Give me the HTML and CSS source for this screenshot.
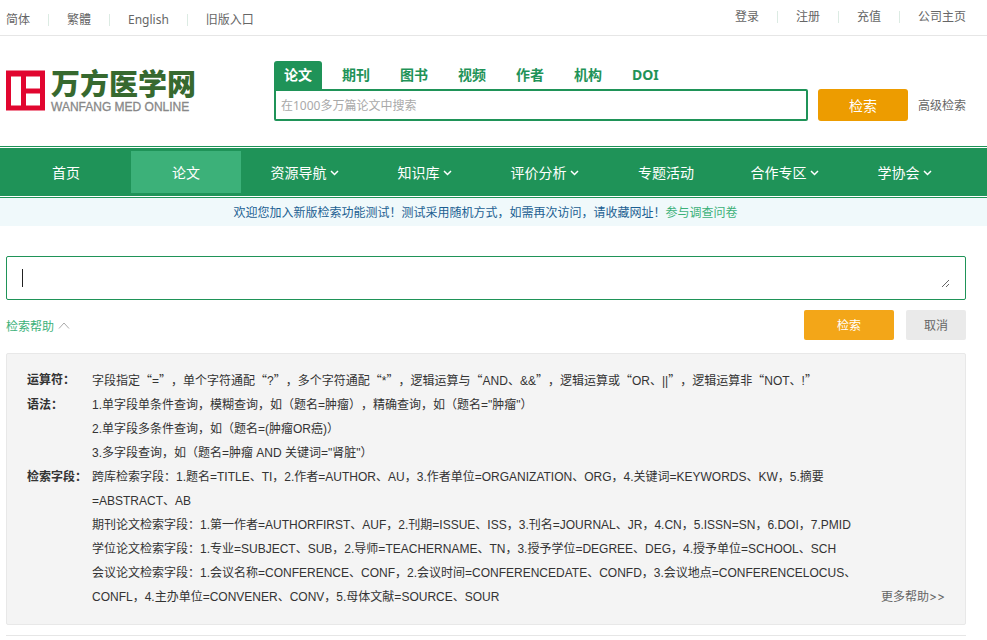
FILE: index.html
```html
<!DOCTYPE html>
<html lang="zh-CN">
<head>
<meta charset="utf-8">
<meta name="viewport" content="width=device-width, initial-scale=1">
<title>万方医学网</title>
<link rel="stylesheet" href="styles.css">
</head>
<body>
<div class="topbar">
  <nav class="links"><a href="#">简体</a><a href="#">繁體</a><a href="#">English</a><a href="#">旧版入口</a></nav>
  <nav class="links account"><a href="#">登录</a><a href="#">注册</a><a href="#">充值</a><a href="#">公司主页</a></nav>
</div>

<header class="header">
  <a class="logo" href="#">
    <svg class="logo-mark" viewBox="0 0 39 40" aria-hidden="true">
      <path fill="#e1062f" d="M0 0h39v40H0z"/>
      <path fill="#fff" d="M5 6h10v29H5zM20 6h14v12H20zM20 23h14v12H20z"/>
    </svg>
    <span class="logo-text"><span class="logo-cn">万方医学网</span><span class="logo-en">WANFANG MED ONLINE</span></span>
  </a>
  <form class="search">
    <div class="tabs">
      <button type="button" class="tab active">论文</button>
      <button type="button" class="tab">期刊</button>
      <button type="button" class="tab">图书</button>
      <button type="button" class="tab">视频</button>
      <button type="button" class="tab">作者</button>
      <button type="button" class="tab">机构</button>
      <button type="button" class="tab">DOI</button>
    </div>
    <div class="search-row">
      <input class="search-input" type="text" placeholder="在1000多万篇论文中搜索" aria-label="搜索论文">
      <button type="button" class="search-button">检索</button>
      <a class="advanced" href="#">高级检索</a>
    </div>
  </form>
</header>

<nav class="mainnav">
  <div class="mainnav-items">
    <a href="#">首页</a>
    <a href="#" class="current">论文</a>
    <a href="#">资源导航<svg class="down" viewBox="0 0 9 6"><path d="M1 1l3.500 3.500L8 1"/></svg></a>
    <a href="#">知识库<svg class="down" viewBox="0 0 9 6"><path d="M1 1l3.500 3.500L8 1"/></svg></a>
    <a href="#">评价分析<svg class="down" viewBox="0 0 9 6"><path d="M1 1l3.500 3.500L8 1"/></svg></a>
    <a href="#">专题活动</a>
    <a href="#">合作专区<svg class="down" viewBox="0 0 9 6"><path d="M1 1l3.500 3.500L8 1"/></svg></a>
    <a href="#">学协会<svg class="down" viewBox="0 0 9 6"><path d="M1 1l3.500 3.500L8 1"/></svg></a>
  </div>
</nav>
<div class="notice">欢迎您加入新版检索功能测试！测试采用随机方式，如需再次访问，请收藏网址！<a href="#">参与调查问卷</a></div>

<main class="main">
  <div class="query"><textarea aria-label="检索表达式"></textarea></div>
  <div class="actions">
    <a class="help-toggle" href="#help">检索帮助<svg viewBox="0 0 12 7"><path d="M1 6.500L6 1l5 5.500"/></svg></a>
    <button type="button" class="submit">检索</button>
    <button type="button" class="cancel">取消</button>
  </div>
  <section class="help" id="help">
    <dl>
      <dt>运算符：</dt>
      <dd>字段指定<span class="quote">“</span>=<span class="quote">”</span>，单个字符通配<span class="quote">“</span>?<span class="quote">”</span>，多个字符通配<span class="quote">“</span>*<span class="quote">”</span>，逻辑运算与<span class="quote">“</span>AND、&amp;&amp;<span class="quote">”</span>，逻辑运算或<span class="quote">“</span>OR、||<span class="quote">”</span>，逻辑运算非<span class="quote">“</span>NOT、!<span class="quote">”</span></dd>
      <dt>语法：</dt>
      <dd>1.单字段单条件查询，模糊查询，如（题名=肿瘤），精确查询，如（题名="肿瘤"）<br>2.单字段多条件查询，如（题名=(肿瘤OR癌)）<br>3.多字段查询，如（题名=肿瘤 AND 关键词="肾脏"）</dd>
      <dt>检索字段：</dt>
      <dd>跨库检索字段：1.题名=TITLE、TI，2.作者=AUTHOR、AU，3.作者单位=ORGANIZATION、ORG，4.关键词=KEYWORDS、KW，5.摘要<br>=ABSTRACT、AB<br>期刊论文检索字段：1.第一作者=AUTHORFIRST、AUF，2.刊期=ISSUE、ISS，3.刊名=JOURNAL、JR，4.CN，5.ISSN=SN，6.DOI，7.PMID<br>学位论文检索字段：1.专业=SUBJECT、SUB，2.导师=TEACHERNAME、TN，3.授予学位=DEGREE、DEG，4.授予单位=SCHOOL、SCH<br>会议论文检索字段：1.会议名称=CONFERENCE、CONF，2.会议时间=CONFERENCEDATE、CONFD，3.会议地点=CONFERENCELOCUS、<br>CONFL，4.主办单位=CONVENER、CONV，5.母体文献=SOURCE、SOUR</dd>
    </dl>
    <a class="more" href="#">更多帮助&gt;&gt;</a>
  </section>
  <hr>
</main>
</body>
</html>
```
FILE: styles.css
```css
* { box-sizing: border-box; }
body {
  margin: 0;
  background: #fff;
  color: #333;
  font: 12px/24px "Noto Sans", "Noto Sans CJK SC", sans-serif;
}
a { color: inherit; text-decoration: none; }
button, input, textarea { font: inherit; border: 0; padding: 0; margin: 0; }

.topbar {
  display: flex;
  justify-content: space-between;
  height: 36px;
  padding: 8px 21px 0 6px;
  border-bottom: 1px solid #e6e6e6;
  color: #666;
}
.links { display: flex; }
.links a { display: flex; align-items: center; height: 24px; }
.links a + a::before {
  content: "";
  width: 1px;
  height: 12px;
  margin: 0 18px;
  background: #dcebe3;
}
.account { margin-top: -3px; }

.header {
  display: flex;
  align-items: flex-start;
  height: 110px;
  padding: 25px 21px 0 6px;
}
.logo { display: flex; align-items: center; gap: 6px; width: 268px; padding-top: 5px; }
.logo-mark { width: 39px; height: 41px; }
.logo-text { display: flex; flex-direction: column; white-space: nowrap; }
.logo-cn {
  height: 33px;
  color: #37692f;
  font: 900 29px/38px "Liberation Sans", "Noto Sans CJK SC", sans-serif;
}
.logo-en { color: #888; font: 12px/16px "Liberation Sans", sans-serif; -webkit-text-stroke: 0.3px #888; }

.search { flex: 1; }
.tabs { display: flex; gap: 10px; }
.tab {
  height: 28px;
  padding: 0 10px;
  border-radius: 3px 3px 0 0;
  background: none;
  color: #1f9358;
  font-size: 14px;
  font-weight: 700;
}
.tab.active { background: #1f9358; color: #fff; }
.search-row { display: flex; align-items: center; }
.search-input {
  flex: 1;
  min-width: 0;
  height: 32px;
  padding: 0 5px;
  border: 2px solid #1f9358;
  border-radius: 0 2px 2px 2px;
}
.search-input::placeholder { color: #a9a9a9; }
.search-button {
  width: 90px;
  height: 32px;
  margin: 0 10px;
  padding-top: 2px;
  border-radius: 3px;
  background: #ed9c00;
  color: #fff;
  font-size: 14px;
}
.advanced { padding-top: 2px; color: #666; }

.mainnav {
  padding: 1px 0;
  border: solid #1f9358;
  border-width: 1px 0;
}
.mainnav-items {
  display: flex;
  gap: 10px;
  padding: 3px 11px;
  background: #1f9358;
}
.mainnav a {
  display: flex;
  align-items: center;
  justify-content: center;
  width: 110px;
  height: 42px;
  padding-top: 2px;
  color: #fff;
  font-size: 14px;
}
.mainnav .current { background: #3cb179; }
.down { width: 9px; height: 6px; margin: 0 3px; fill: none; stroke: #fff; stroke-width: 1.5; }

.notice {
  height: 28px;
  padding-right: 16px;
  background: #f0f9fb;
  color: #1c5f92;
  line-height: 30px;
  text-align: center;
}
.notice a { color: #3cb179; }

.main { padding: 30px 21px 0 6px; }
.query {
  position: relative;
  height: 44px;
  padding: 11px 15px;
  border: 1px solid #1f9358;
  border-radius: 2px;
}
.query::before {
  content: "";
  position: absolute;
  top: 12px;
  left: 15px;
  width: 1px;
  height: 18px;
  background: #222;
}
.query textarea { display: block; width: 100%; height: 20px; outline: 0; background: none; resize: both; }

.actions { display: flex; align-items: center; gap: 12px; padding: 10px 0 13px; }
.help-toggle { display: flex; align-items: center; gap: 4px; margin-right: auto; padding-top: 4px; color: #3cb179; }
.help-toggle svg { width: 12px; height: 7px; margin-bottom: 4px; fill: none; stroke: #aaa; }
.actions button { height: 30px; padding-top: 2px; border-radius: 2px; }
.submit { width: 90px; background: #f3a618; color: #fff; }
.cancel { width: 60px; background: #eaeaea; color: #666; }

.help {
  display: flex;
  align-items: flex-end;
  justify-content: space-between;
  padding: 14px 20px 15px;
  border: 1px solid #e8e8e8;
  border-radius: 2px;
  background: #f4f4f4;
  text-spacing-trim: space-all;
}
.help dl {
  display: grid;
  grid-template-columns: 65px auto;
  margin: 0;
  font-family: "Liberation Sans", "Noto Sans CJK SC", sans-serif;
  white-space: nowrap;
}
.help dt { font-weight: 700; }
.help dd { margin: 0; }
.help .quote { font-family: "Noto Sans CJK SC", sans-serif; }
.more { color: #666; font-family: Inter, "Noto Sans CJK SC", sans-serif; }
hr { margin: 10px 0 0; border: 0; border-top: 1px solid #e6e6e6; }
```
